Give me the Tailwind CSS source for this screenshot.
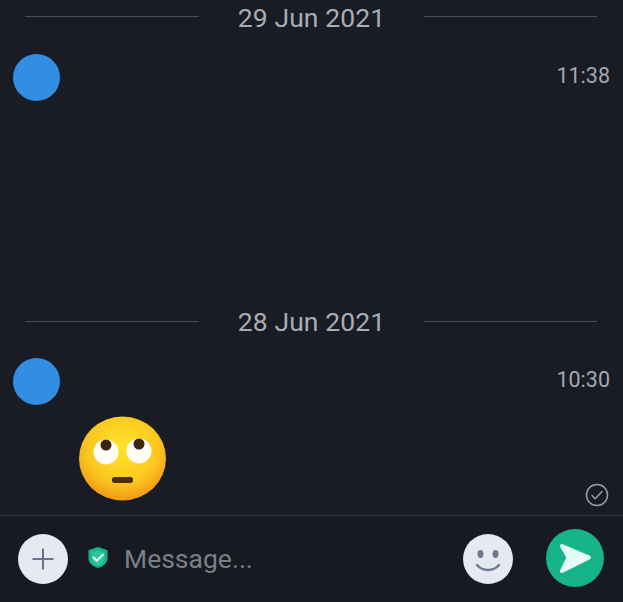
<!doctype html>
<html>
<head>
<meta charset="utf-8">
<script src="https://cdn.jsdelivr.net/npm/@tailwindcss/browser@4"></script>
</head>
<body class="m-0 bg-[#191c24]">
<div class="w-[623px] h-[602px] overflow-hidden flex flex-col bg-[#191c24] font-['Roboto',sans-serif]">
  <main class="h-[515px] flex flex-col">
    <section class="h-[305px] flex flex-col">
      <div class="h-[34px] flex items-center pl-[25px] pr-[26px]">
        <div class="w-[174px] h-px bg-[#4a4e58] -mt-[2px]"></div>
        <div class="flex-1 text-center text-[26.5px] leading-[34px] text-[#a9adb5] tracking-[0.1px] mt-[1px]">29 Jun 2021</div>
        <div class="w-[173px] h-px bg-[#4a4e58] -mt-[2px]"></div>
      </div>
      <div class="mt-[20px] pl-[13px] pr-[13px] flex items-start justify-between">
        <div class="w-[47px] h-[47px] rounded-full bg-[#318ee2]"></div>
        <div class="mt-[9px] text-[21.5px] leading-[26px] text-[#a3a8b3]">11:38</div>
      </div>
    </section>
    <section class="flex-1 flex flex-col">
      <div class="h-[34px] flex items-center pl-[25px] pr-[26px]">
        <div class="w-[174px] h-px bg-[#4a4e58] -mt-[1px]"></div>
        <div class="flex-1 text-center text-[26.5px] leading-[34px] text-[#a9adb5] tracking-[0.1px]">28 Jun 2021</div>
        <div class="w-[173px] h-px bg-[#4a4e58] -mt-[1px]"></div>
      </div>
      <div class="mt-[19px] pl-[13px] pr-[13px] flex items-start justify-between">
        <div class="w-[47px] h-[47px] rounded-full bg-[#318ee2]"></div>
        <div class="mt-[9px] text-[21.5px] leading-[26px] text-[#a3a8b3]">10:30</div>
      </div>
      <div class="mt-[11px] pl-[78px] pr-[14px] flex items-end justify-between">
        <svg class="w-[89px] h-[85px]" viewBox="0 0 89 85">
          <defs>
            <radialGradient id="face" cx="50%" cy="38%" r="62%">
              <stop offset="0%" stop-color="#fee52a"/>
              <stop offset="65%" stop-color="#fcc820"/>
              <stop offset="100%" stop-color="#f29a14"/>
            </radialGradient>
          </defs>
          <ellipse cx="44.500" cy="42.500" rx="43.500" ry="42" fill="url(#face)"/>
          <circle cx="28" cy="36" r="12.500" fill="#fff" opacity=".96"/>
          <circle cx="61" cy="35" r="12.500" fill="#fff" opacity=".96"/>
          <circle cx="28" cy="29" r="5.500" fill="#3d2611"/>
          <circle cx="61" cy="28" r="5.500" fill="#3d2611"/>
          <rect x="34" y="61" width="21" height="6" rx="2.500" fill="#4a2f10"/>
        </svg>
        <svg class="w-[24px] h-[24px] -mb-[6px]" viewBox="0 0 24 24" fill="none" stroke="#9a9da4" stroke-width="1.500">
          <circle cx="12" cy="12" r="10.500"/>
          <path d="M7 12.500l3.200 3.200L17 8.500" stroke-linecap="round" stroke-linejoin="round"/>
        </svg>
      </div>
    </section>
  </main>
  <footer class="flex-1 border-t border-[#33363d] bg-[#171a21] flex items-center pl-[18px] pr-[19px]">
    <button class="w-[50px] h-[50px] rounded-full bg-[#e6e9f2] flex items-center justify-center">
      <svg class="w-[24px] h-[24px]" viewBox="0 0 24 24" fill="none" stroke="#6e7287" stroke-width="2">
        <path d="M12 1.500v21M1.500 12h21"/>
      </svg>
    </button>
    <svg class="w-[22px] h-[23px] ml-[19px] -mt-[3px]" viewBox="0 0 22 23">
      <path d="M11 1l9.500 3.200v8.300c0 4.600-4 7.800-9.500 9.500C5.500 20.300 1.500 17.100 1.500 12.500V4.200z" fill="#17b48c"/>
      <path d="M11 4.500l6.500 2.200v6c0 3.300-2.800 5.500-6.500 6.800-3.700-1.300-6.500-3.500-6.500-6.800v-6z" fill="#2cc7a0"/>
      <path d="M6.500 11.500l3.300 3.300 6-6" fill="none" stroke="#d6f7ec" stroke-width="2.200" stroke-linecap="round" stroke-linejoin="round"/>
    </svg>
    <div class="ml-[15px] text-[26.5px] leading-[34px] text-[#7c7f87]">Message...</div>
    <div class="flex-1"></div>
    <button class="w-[50px] h-[50px] rounded-full bg-[#e6e9f2] flex items-center justify-center">
      <svg class="w-[50px] h-[50px]" viewBox="0 0 50 50" fill="none">
        <ellipse cx="17.500" cy="20" rx="3" ry="4" fill="#6e7a90"/>
        <ellipse cx="32.500" cy="20" rx="3" ry="4" fill="#6e7a90"/>
        <path d="M14 31c3 3.500 7 5 11 5s8-1.500 11-5" stroke="#6e7a90" stroke-width="2.500" stroke-linecap="round"/>
      </svg>
    </button>
    <button class="ml-[33px] w-[58px] h-[58px] rounded-full bg-[#17b48a] flex items-center justify-center -mt-[2px]">
      <svg class="w-[58px] h-[58px]" viewBox="0 0 58 58">
        <path d="M16 17l27 11.500-27 13.500 6.500-13.500z" fill="#e4fbf5" stroke="#e4fbf5" stroke-width="4" stroke-linejoin="round"/>
      </svg>
    </button>
  </footer>
</div>
</body>
</html>
